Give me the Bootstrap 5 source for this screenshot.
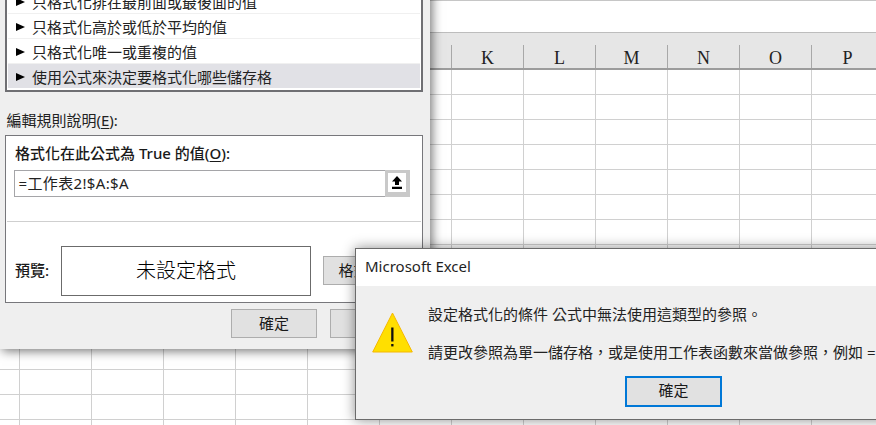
<!DOCTYPE html>
<html lang="zh-Hant">
<head>
<meta charset="utf-8">
<title>Excel</title>
<link href="https://cdn.jsdelivr.net/npm/bootstrap@5.3.0/dist/css/bootstrap.min.css" rel="stylesheet">
<style>
html,body{margin:0;width:876px;height:425px;overflow:hidden;background:#fff}
body,.xl-page{font-family:"Noto Sans","Noto Sans CJK TC",sans-serif;font-size:15px;color:#1a1a1a;line-height:1.2}
.xl-page{position:relative;width:876px;height:425px;overflow:hidden}
.xl-formula{height:33px;background:#fff;border-top:1px solid #c6c6c6;border-bottom:1px solid #bdbdbd}
.xl-heads{height:37px;background:#e6e6e6;border-bottom:2px solid #9c9c9c;padding-top:12px}
.xl-spacer{width:451px;flex:none}
.xl-colhead{width:72px;flex:none;border-left:1px solid #a8a8a8;font:18px/22px "Liberation Serif",serif;text-align:center;color:#222;padding-top:2px}
.xl-cells{height:356px;background-color:#fff;background-image:repeating-linear-gradient(180deg,transparent 0 24px,#d0d0d0 24px 25px),repeating-linear-gradient(90deg,transparent 0 19px,#d0d0d0 19px 20px,transparent 20px 72px)}
.xl-dialog{position:absolute;background:#efefef}
.xl-rule{left:0;top:-60px;width:430px;height:409px;box-shadow:2px 2px 10px rgba(0,0,0,.55);padding:0 7px 0 5px}
.xl-list{height:151.5px;background:#fff;border:2px solid #6f6f73;padding:0 1px 2px;display:flex;flex-direction:column;justify-content:flex-end;width:418px}
.xl-item{height:25px;flex:none;display:flex;align-items:center;padding:2px 0 0 8px;border-bottom:1px solid #f0f0f0;color:#222;white-space:nowrap}
.xl-item.xl-on{background:#e1e1e6;border-bottom:0;height:24px}
.xl-arrow{width:0;height:0;border-left:9px solid #000;border-top:4.5px solid transparent;border-bottom:4.5px solid transparent;margin-right:7px;flex:none}
.xl-label{padding:19px 0 0 1.5px;height:43px;color:#222}
.xl-panel{width:418px;height:168px;background:#fff;border:1px solid #77777b;position:relative}
.xl-formula-label{font-weight:500;padding:8px 0 0 9px;height:34px;color:#1a1a1a}
.xl-input{margin-left:8px;width:396px;height:27px;border:1px solid #a5a5a8;background:#fff}
.xl-input-text{flex:1;padding-left:3.5px;font-size:15px;line-height:25px;letter-spacing:.35px;color:#222}
.xl-up{width:25px;flex:none;background:#fff;border:3px solid #c9c9c9;border-right-width:4px;border-bottom-width:5px;margin:-1px -1px -1px 0;display:flex;align-items:center;justify-content:center}
.xl-divider{margin:24px 1px 0;height:1px;background:#cfcfcf}
.xl-preview-row{padding:24px 0 0 9px;height:74px}
.xl-preview-label{width:46px;font-weight:500;flex:none;color:#1a1a1a;padding-bottom:2px}
.xl-preview{width:250px;height:50px;flex:none;border:1px solid #6b6b6b;font-size:20px;font-weight:300;display:flex;align-items:center;justify-content:center;color:#000}
.xl-btn{--bs-btn-bg:#e1e1e1;--bs-btn-border-color:#adadad;--bs-btn-color:#1a1a1a;--bs-btn-hover-bg:#e1e1e1;--bs-btn-hover-border-color:#adadad;--bs-btn-border-radius:0;--bs-btn-padding-x:0;--bs-btn-padding-y:0;--bs-btn-font-size:15px;border-width:1px;font-family:inherit}
.xl-btn-fmt{width:90px;height:29px;margin-left:12px}
.xl-btn-ok{width:86px;height:29px}
.xl-foot{padding:6px 0 0 226px;gap:13px}
.xl-alert{left:355px;top:248px;width:560px;height:172px;border:1px solid #6b6b6b;box-shadow:0 0 12px rgba(0,0,0,.45)}
.xl-title{height:37px;background:#fff;padding:8px 0 0 9px;font-size:15px;color:#1f1f1f}
.xl-alert-body{padding-left:16px;padding-top:26px}
.xl-warn{width:41px;height:41px;flex:none;display:block}
.xl-alert-text{padding:0 0 0 15px;white-space:nowrap;color:#222;margin-top:-7px}
.xl-alert-text p{margin:0 0 20px;line-height:18px}
.xl-btn-default{width:97px;height:31px;border:2px solid #0078d7;position:absolute;left:269px;top:127px;padding-bottom:2px}
u{text-underline-offset:2px}
</style>
</head>
<body>
<div class="xl-page">
  <div class="xl-formula"></div>
  <div class="xl-heads d-flex">
    <div class="xl-spacer"></div>
    <div class="xl-colhead">K</div>
    <div class="xl-colhead">L</div>
    <div class="xl-colhead">M</div>
    <div class="xl-colhead">N</div>
    <div class="xl-colhead">O</div>
    <div class="xl-colhead">P</div>
  </div>
  <div class="xl-cells"></div>

  <div class="xl-dialog xl-rule">
    <div class="xl-list">
      <div class="xl-item"><span class="xl-arrow"></span>只格式化排在最前面或最後面的值</div>
      <div class="xl-item"><span class="xl-arrow"></span>只格式化高於或低於平均的值</div>
      <div class="xl-item"><span class="xl-arrow"></span>只格式化唯一或重複的值</div>
      <div class="xl-item xl-on"><span class="xl-arrow"></span>使用公式來決定要格式化哪些儲存格</div>
    </div>
    <div class="xl-label">編輯規則說明(<u>E</u>):</div>
    <div class="xl-panel">
      <div class="xl-formula-label">格式化在此公式為 True 的值(<u>O</u>):</div>
      <div class="xl-input d-flex">
        <div class="xl-input-text">=工作表2!$A:$A</div>
        <div class="xl-up">
          <svg width="10" height="13" viewBox="0 0 10 13" aria-hidden="true"><path d="M5 0 L10 5.5 H7 V9 H3 V5.5 H0 Z M0 10.8 H10 V13 H0 Z" fill="#000"/></svg>
        </div>
      </div>
      <div class="xl-divider"></div>
      <div class="xl-preview-row d-flex align-items-center">
        <div class="xl-preview-label">預覽:</div>
        <div class="xl-preview">未設定格式</div>
        <button type="button" class="btn xl-btn xl-btn-fmt">格式(F)...</button>
      </div>
    </div>
    <div class="xl-foot d-flex">
      <button type="button" class="btn xl-btn xl-btn-ok">確定</button>
      <button type="button" class="btn xl-btn xl-btn-ok">取消</button>
    </div>
  </div>

  <div class="xl-dialog xl-alert">
    <div class="xl-title">Microsoft Excel</div>
    <div class="xl-alert-body d-flex">
      <svg class="xl-warn" viewBox="0 0 41 41" aria-hidden="true"><path d="M20.5 1 L40.3 40 H.7 Z" fill="#ffdf00" stroke="#f5b800" stroke-width="1"/><rect x="19.2" y="15.5" width="2.3" height="14" fill="#111"/><rect x="19.2" y="32" width="2.3" height="2.4" fill="#111"/></svg>
      <div class="xl-alert-text">
        <p>設定格式化的條件 公式中無法使用這類型的參照。</p>
        <p>請更改參照為單一儲存格&#xFF0C;或是使用工作表函數來當做參照&#xFF0C;例如 =</p>
      </div>
    </div>
    <button type="button" class="btn xl-btn xl-btn-default">確定</button>
  </div>
</div>
</body>
</html>
